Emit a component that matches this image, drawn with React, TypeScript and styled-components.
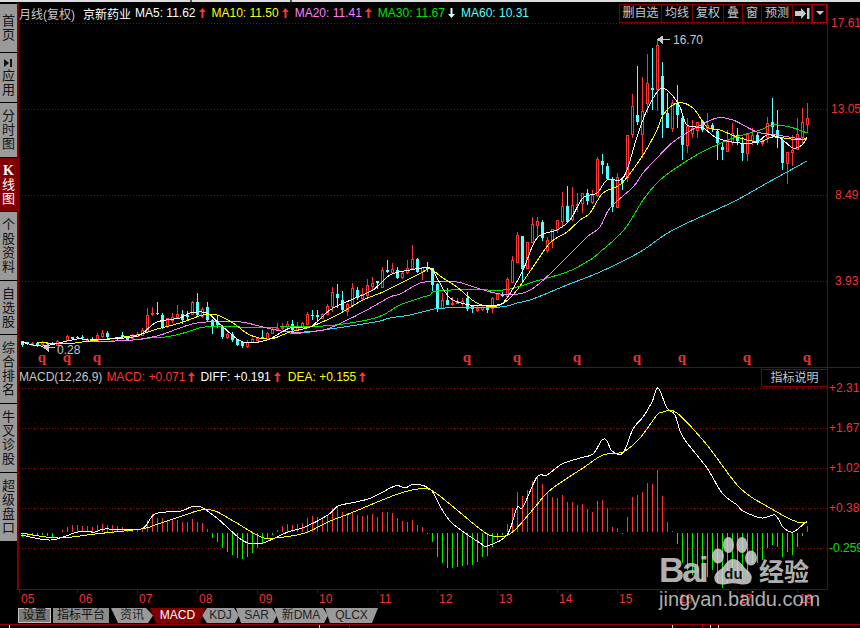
import React from 'react';
import styled, { createGlobalStyle } from 'styled-components';

const DARK_RED = '#800000';
const RED = '#ff3232';
const CYAN = '#54ffff';
const FONT = '"Liberation Sans", "Noto Sans CJK SC", sans-serif';

// Candles in page pixels: x, kind, high, body top, body bottom, low
type Candle = [number, 'r' | 'c', number, number, number, number];

const CANDLES: Candle[] = [
  [22,'c',341,341,345,347],[27,'c',342,342,344,345],[32,'r',342,343,345,345],[37,'c',342,343,345,347],
  [42,'r',341,342,344,346],[47,'c',342,343,344,345],[52,'c',342,343,344,344],[57,'r',340,341,345,346],
  [62,'c',342,343,344,344],[67,'r',335,336,340,341],[72,'c',337,337,339,339],[77,'c',336,337,338,339],
  [82,'c',335,337,338,339],[87,'r',338,339,340,341],[92,'c',337,339,342,342],[97,'r',333,335,340,340],
  [102,'r',330,333,336,338],[107,'c',331,333,337,338],[112,'r',340,340,341,342],[117,'c',339,340,341,341],
  [122,'c',332,335,337,338],[127,'c',337,337,340,340],[132,'r',334,336,338,340],[137,'r',332,334,336,337],
  [142,'r',328,330,335,336],[147,'r',308,315,331,332],[152,'r',307,313,314,316],[157,'c',302,313,314,315],
  [162,'c',313,315,327,329],[167,'r',318,318,326,328],[172,'r',313,317,320,323],[177,'r',305,314,317,318],
  [182,'c',310,314,320,324],[187,'c',311,315,317,321],[192,'r',301,302,314,315],[197,'c',293,302,315,317],
  [202,'r',307,309,316,318],[207,'c',302,307,320,322],[212,'c',319,320,327,334],[217,'c',315,322,325,328],
  [222,'c',325,327,337,339],[227,'r',333,334,337,339],[232,'c',332,334,340,342],[237,'c',339,339,345,346],
  [242,'c',342,342,346,348],[247,'r',340,342,346,348],[252,'r',338,339,342,343],[257,'r',337,338,340,341],
  [262,'c',330,337,337,338],[267,'r',332,333,339,340],[272,'r',328,329,333,334],[277,'r',323,328,329,330],
  [282,'r',323,327,328,330],[287,'r',321,324,326,328],[292,'c',320,324,330,331],[297,'r',322,327,330,331],
  [302,'r',322,323,327,328],[307,'r',312,314,324,325],[312,'c',310,315,316,320],[317,'c',310,315,317,321],
  [322,'r',313,314,318,319],[327,'r',304,306,314,315],[332,'r',287,292,306,312],[337,'c',284,294,298,308],
  [342,'c',291,300,310,311],[347,'r',303,304,311,316],[352,'r',283,288,305,306],[357,'c',287,290,298,300],
  [362,'r',288,294,298,300],[367,'r',279,285,295,297],[372,'r',277,283,286,290],[377,'c',281,281,283,289],
  [382,'r',267,270,287,288],[387,'c',260,270,272,273],[392,'r',263,269,272,274],[397,'c',267,270,278,279],
  [402,'r',272,273,277,279],[407,'r',260,268,272,274],[412,'r',245,259,268,269],[417,'c',258,259,272,273],
  [422,'r',267,267,271,280],[427,'c',262,267,269,272],[432,'c',268,268,285,291],[437,'c',283,284,308,312],
  [442,'r',293,300,308,309],[447,'c',288,300,305,305],[452,'r',297,303,304,306],[457,'r',298,301,303,304],
  [462,'r',298,301,303,306],[467,'c',292,298,309,311],[472,'c',305,306,309,313],[477,'r',306,308,310,312],
  [482,'r',305,307,309,311],[487,'c',305,308,310,313],[492,'r',297,298,308,313],[497,'r',293,294,299,300],
  [502,'c',292,294,296,297],[507,'r',277,279,296,297],[512,'r',256,260,282,282],[517,'r',232,235,262,263],
  [522,'c',236,236,269,283],[527,'r',242,242,268,269],[532,'r',217,224,242,243],[537,'r',217,221,225,239],
  [542,'c',220,222,238,241],[547,'r',237,240,250,253],[552,'r',229,229,240,248],[557,'r',220,220,229,233],
  [562,'r',192,206,221,228],[567,'c',186,206,222,222],[572,'r',187,205,219,221],[577,'r',193,204,205,212],
  [582,'r',193,193,203,213],[587,'c',189,193,201,205],[592,'r',190,195,202,204],[597,'r',157,159,195,197],
  [602,'c',154,161,165,174],[607,'c',163,166,179,180],[612,'c',177,180,207,212],[617,'r',173,177,207,208],
  [622,'c',177,180,183,190],[627,'r',135,135,177,182],[632,'r',94,106,134,138],[637,'c',66,115,122,125],
  [642,'r',77,111,134,158],[647,'r',54,83,103,113],[652,'c',48,88,90,110],[657,'r',40,45,89,111],
  [662,'c',62,76,115,138],[667,'c',93,113,128,128],[672,'r',100,103,128,132],[677,'c',85,104,115,128],
  [682,'c',115,118,145,160],[687,'r',118,126,145,153],[692,'r',120,128,133,138],[697,'r',122,122,130,138],
  [702,'c',120,121,130,132],[707,'r',113,125,128,130],[712,'c',123,125,129,132],[717,'c',130,131,143,160],
  [722,'c',143,147,150,160],[727,'r',130,140,151,151],[732,'r',123,133,142,145],[737,'c',128,135,141,145],
  [742,'c',137,143,153,161],[747,'r',133,134,153,161],[752,'r',128,135,140,145],[757,'c',132,135,143,145],
  [762,'r',138,142,143,146],[767,'r',117,123,137,143],[772,'c',98,122,127,137],[777,'c',110,130,137,148],
  [782,'c',138,140,163,170],[787,'r',152,152,163,184],[792,'r',135,150,152,166],[797,'r',118,134,149,150],
  [802,'r',108,122,137,145],[807,'r',103,118,124,133],
];

const PRICE_LINES = [
  { color: '#2fd8ec', points: '290,334 310,332 330,329 357,325 380,321 390,318 410,315 430,310 445,308 500,307 517,303 533,299 567,285 600,272 640,252 673,230 733,202 767,183 807,161' },
  { color: '#00e800', points: '137,340 150,338 165,337 180,334 190,331 205,327 240,327 280,327 323,326 343,324 367,320 383,315 400,305 420,298 430,295 437,291 483,289 490,291 510,289 533,282 567,272 590,260 600,252 624,230 643,200 657,183 673,170 700,153 717,145 733,138 760,130 773,125 790,127 807,133' },
  { color: '#ff80ff', points: '90,342 133,340 157,336 180,328 197,323 230,321 247,323 267,328 290,332 323,330 343,322 367,310 390,297 400,294 420,283 433,282 457,282 477,288 500,294 523,293 540,283 567,257 587,237 600,227 610,208 633,187 643,173 657,158 673,142 697,127 717,118 733,120 757,132 777,135 807,140' },
  { color: '#ffff00', points: '37,342 63,344 90,341 137,335 157,329 180,323 203,315 217,315 233,323 250,335 270,339 290,332 310,327 337,315 363,300 383,292 407,280 423,272 430,269 443,278 457,287 477,303 497,306 513,295 533,267 550,243 567,232 580,220 590,213 603,193 622,183 643,155 657,130 663,115 677,103 693,108 707,127 720,130 740,138 760,142 773,137 800,140 807,137' },
  { color: '#ffffff', points: '22,342 43,346 77,339 90,340 133,337 143,333 157,322 180,318 190,313 207,313 223,327 243,342 267,340 290,328 310,327 330,310 353,299 373,290 390,275 410,270 430,268 437,278 450,298 470,305 497,305 507,298 523,270 537,238 557,230 570,220 583,198 597,193 607,180 620,180 627,170 637,137 647,110 660,89 670,93 680,107 687,125 703,128 717,138 740,143 757,142 767,135 780,138 793,148 802,145 807,137' },
];

const MACD_LINES = [
  { color: '#ffffff', points: '21,535 51,540 78,532 95,532 105,529 141,529 155,514 181,511 191,507 201,507 218,519 238,537 248,543 263,543 288,532 305,527 328,515 338,506 351,503 371,498 395,486 405,488 415,484 431,490 441,508 451,522 465,533 480,543 487,546 507,535 517,508 523,507 537,477 547,475 562,464 580,458 593,454 602,440 607,441 612,451 623,453 633,429 643,417 652,402 658,388 667,408 675,415 683,437 707,468 722,493 737,505 743,511 762,518 775,515 783,527 793,532 807,521' },
  { color: '#ffff00', points: '21,533 58,538 95,534 141,529 155,525 185,515 201,510 215,511 235,522 261,537 275,538 305,533 328,522 351,513 395,495 418,489 431,490 451,505 480,529 493,536 510,534 530,513 547,493 563,481 583,468 603,455 623,452 640,438 657,415 663,412 677,413 707,445 740,488 770,508 797,522 807,522' },
];

// Histogram ends in page pixels, one bar every 5px starting at x = 22; above 532 is red, below is green
const MACD_BARS = [
  537,536,536,535,535,536,537,533,
  530,527,525,525,526,526,527,525,524,525,525,526,527,529,529,529,528,520,514,518,518,520,520,520,522,522,519,522,523,529,
  538,542,548,552,555,558,559,557,553,548,543,538,535,
  530,526,524,525,524,523,518,516,517,517,515,508,507,512,513,512,515,516,515,514,517,512,512,513,518,521,522,520,525,527,534,
  542,557,563,568,568,567,566,565,565,562,557,556,547,540,535,
  524,508,492,496,490,481,476,484,493,497,498,495,502,502,505,504,509,512,501,500,508,527,528,534,517,497,495,492,483,484,470,496,522,531,
  544,563,570,575,573,580,577,570,583,588,583,580,580,577,575,563,563,560,548,545,547,557,552,555,547,536,
  526,
];

const Q_MARKS = [42, 67, 97, 467, 517, 577, 637, 682, 747, 807];
const PRICE_GRID = [23, 109, 195, 281];
const MACD_GRID = [388, 428, 468, 508, 548];
const YEARS = ['05', '06', '07', '08', '09', '10', '11', '12', '13', '14', '15', '16', '17', '18'];

const SIDE_TABS = [
  { label: '首页', height: 48 },
  { label: '应用', height: 49, icon: true },
  { label: '分时图', height: 54 },
  { label: '线图', height: 53, active: true },
  { label: '个股资料', height: 68 },
  { label: '自选股', height: 53 },
  { label: '综合排名', height: 68 },
  { label: '牛叉诊股', height: 68 },
  { label: '超级盘口', height: 68 },
];

const TOOL_BUTTONS = [
  { label: '删自选', width: 42 },
  { label: '均线', width: 31 },
  { label: '复权', width: 31 },
  { label: '叠', width: 19 },
  { label: '窗', width: 19 },
  { label: '预测', width: 31 },
];

const MA_ITEMS = [
  { label: 'MA5: 11.62', color: '#ffffff', arrow: RED },
  { label: 'MA10: 11.50', color: '#ffff00', arrow: RED },
  { label: 'MA20: 11.41', color: '#ff80ff', arrow: RED },
  { label: 'MA30: 11.67', color: '#00e800', arrow: '#d8ffff', down: true },
  { label: 'MA60: 10.31', color: CYAN },
];

const BOTTOM_TABS = [
  { label: '资讯', width: 42, shape: 'polygon(0 0, 35px 0, 100% 50%, 37px 100%, 7px 100%)' },
  { label: 'MACD', width: 55, active: true, shape: 'polygon(0 0, 100% 0, 50px 100%, 6px 100%)' },
  { label: 'KDJ', width: 37, shape: 'polygon(5px 0, 32px 0, 100% 50%, 33px 100%, 5px 100%, 0 50%)' },
  { label: 'SAR', width: 41, shape: 'polygon(0 0, 36px 0, 100% 50%, 37px 100%, 5px 100%)' },
  { label: '新DMA', width: 54, shape: 'polygon(0 0, 49px 0, 100% 50%, 50px 100%, 5px 100%)' },
  { label: 'QLCX', width: 53, shape: 'polygon(0 0, 100% 0, 47px 100%, 5px 100%)' },
];

// Rounds a point list into a curve, the way the moving averages read in the reference
const toCurve = (points: string) => {
  const p = points.split(' ').map((pair) => pair.split(',').map(Number));
  let d = `M${p[0][0]} ${p[0][1]}`;
  for (let i = 0; i < p.length - 1; i++) {
    const a = p[Math.max(i - 1, 0)];
    const b = p[i];
    const c = p[i + 1];
    const e = p[Math.min(i + 2, p.length - 1)];
    const c1 = [b[0] + (c[0] - a[0]) / 6, b[1] + (c[1] - a[1]) / 6];
    const c2 = [c[0] - (e[0] - b[0]) / 6, c[1] - (e[1] - b[1]) / 6];
    d += `C${c1[0]} ${c1[1]} ${c2[0]} ${c2[1]} ${c[0]} ${c[1]}`;
  }
  return d;
};

const GlobalStyle = createGlobalStyle`
  html, body {
    margin: 0;
    background: #000;
    overflow: hidden;
  }
`;

const Page = styled.div`
  position: relative;
  width: 860px;
  height: 628px;
  overflow: hidden;
  background: #000;
  display: flex;
  flex-direction: column;
  font: 12px ${FONT};
`;

const TopStrip = styled.div`
  height: 2px;
  margin-bottom: 1px;
  background:
    linear-gradient(#555, #555) 190px 0 / 2px 100% no-repeat,
    linear-gradient(#555, #555) 290px 0 / 2px 100% no-repeat,
    #dcdcdc;
`;

const Workspace = styled.div`
  display: flex;
  height: 587px;
`;

const SideBar = styled.div`
  width: 17px;
  flex: none;
  border-right: 2px solid ${DARK_RED};
  padding-top: 1px;
  display: flex;
  flex-direction: column;
  gap: 1px;
`;

const SideTab = styled.div<{ $height: number; $active?: boolean }>`
  height: ${({ $height }) => $height}px;
  flex: none;
  background: ${({ $active }) => ($active ? DARK_RED : '#9a9a9a')};
  color: ${({ $active }) => ($active ? '#fff' : '#111')};
  display: flex;
  flex-direction: column;
  align-items: center;
  justify-content: center;
`;

const SideLabel = styled.div`
  width: 13px;
  font-size: 13px;
  line-height: 14px;
  text-align: center;
`;

const KMark = styled.div`
  font: bold 14px/14px "Liberation Serif", serif;
`;

const PlayIcon = styled.svg`
  width: 9px;
  height: 8px;
  margin-bottom: 2px;
`;

const Panes = styled.div`
  flex: 1;
  min-width: 0;
  display: flex;
  flex-direction: column;
`;

const PriceRow = styled.div`
  display: flex;
  height: 364px;
`;

const MacdRow = styled.div`
  display: flex;
  height: 222px;
  border-top: 1px solid ${DARK_RED};
`;

const Plot = styled.div<{ $closed?: boolean }>`
  width: 808px;
  flex: none;
  border-right: 1px solid ${DARK_RED};
  border-bottom: ${({ $closed }) => ($closed ? `1px solid ${DARK_RED}` : 'none')};
`;

const PlotHeader = styled.div<{ $height: number }>`
  height: ${({ $height }) => $height}px;
  display: flex;
  align-items: center;
  justify-content: space-between;
`;

const Legend = styled.div`
  display: flex;
  align-items: center;
  white-space: nowrap;
`;

const LegendText = styled.span<{ $color: string; $gap?: number }>`
  color: ${({ $color }) => $color};
  margin-left: ${({ $gap }) => $gap ?? 0}px;
`;

const ArrowMark = styled.svg<{ $trail?: number }>`
  width: 7px;
  height: 10px;
  margin-left: 3px;
  margin-right: ${({ $trail }) => $trail ?? 6}px;
`;

const Toolbar = styled.div`
  display: flex;
  height: 19px;
  border: 1px solid ${DARK_RED};
  border-right: none;
  box-sizing: border-box;
`;

const ToolButton = styled.div<{ $width: number }>`
  width: ${({ $width }) => $width}px;
  border-right: 1px solid ${DARK_RED};
  box-sizing: border-box;
  color: #c8c8c8;
  font-size: 12px;
  line-height: 17px;
  text-align: center;
  display: flex;
  align-items: center;
  justify-content: center;
`;

const CaretButton = styled(ToolButton)`
  border: 1px solid #b00000;
  margin-top: -1px;
  height: 19px;
`;

const Caret = styled.div`
  border-left: 4px solid transparent;
  border-right: 4px solid transparent;
  border-top: 4px solid #c8c8c8;
`;

const ExplainButton = styled.div`
  width: 66px;
  height: 18px;
  box-sizing: border-box;
  border: 1px solid ${DARK_RED};
  border-right: none;
  color: #c8c8c8;
  font-size: 12px;
  line-height: 16px;
  text-align: center;
  margin-top: 1px;
`;

const ChartSvg = styled.svg`
  display: block;
`;

const QMark = styled.text`
  fill: #e83030;
  font: bold 15px "Liberation Serif", serif;
  text-anchor: middle;
`;

const Note = styled.text`
  fill: #c4c8cc;
  font: 12px ${FONT};
`;

const Axis = styled.div<{ $gap: number }>`
  flex: 1;
  min-width: 0;
  overflow: hidden;
  display: flex;
  flex-direction: column;
  gap: ${({ $gap }) => $gap}px;
  padding: 12px 0 0 1px;
`;

const AxisLabel = styled.div<{ $color?: string; $indent?: number }>`
  height: 16px;
  line-height: 16px;
  white-space: nowrap;
  color: ${({ $color }) => $color ?? '#f03030'};
  padding-left: ${({ $indent }) => $indent ?? 0}px;
`;

const YearRow = styled.div`
  height: 18px;
  display: flex;
  padding-left: 19px;
`;

const YearCell = styled.div<{ $first?: boolean }>`
  width: ${({ $first }) => ($first ? 58 : 60)}px;
  flex: none;
  position: relative;
  color: #f03030;
  font-size: 12px;
  padding: 2px 0 0 2px;
  line-height: 15px;
  box-sizing: border-box;

  &::before {
    content: '';
    position: absolute;
    left: 0;
    top: 0;
    width: 1px;
    height: 3px;
    background: ${DARK_RED};
  }
`;

const BottomTabs = styled.div`
  height: 16px;
  display: flex;
  padding-left: 18px;
  box-sizing: border-box;
  padding-bottom: 1px;
`;

const FlatTab = styled.div<{ $width: number; $dark?: boolean }>`
  width: ${({ $width }) => $width}px;
  margin-right: 2px;
  box-sizing: border-box;
  background: ${({ $dark }) => ($dark ? '#7a7a7a' : '#8c8c8c')};
  border: ${({ $dark }) => ($dark ? '1px solid #c0c0c0' : 'none')};
  color: #111;
  font-size: 12px;
  line-height: ${({ $dark }) => ($dark ? 13 : 15)}px;
  text-align: center;
`;

const ShapeTab = styled.div<{ $width: number; $active?: boolean; $shape: string }>`
  width: ${({ $width }) => $width}px;
  flex: none;
  margin-right: -3px;
  clip-path: ${({ $shape }) => $shape};
  background: ${({ $active }) => ($active ? DARK_RED : '#9a9a9a')};
  color: ${({ $active }) => ($active ? '#fff' : '#222')};
  font-size: 12px;
  line-height: 15px;
  text-align: center;
  position: relative;
  z-index: ${({ $active }) => ($active ? 1 : 0)};

  &:first-of-type {
    margin-left: 1px;
  }
`;

const Footer = styled.div`
  height: 3px;
  border-top: 1px solid #a00000;
  background:
    linear-gradient(#fff, #fff) 9px 0 / 1px 100% no-repeat,
    linear-gradient(${CYAN}, ${CYAN}) 319px 0 / 1px 100% no-repeat,
    linear-gradient(#900, #900) 349px 0 / 1px 100% no-repeat,
    linear-gradient(${CYAN}, ${CYAN}) 672px 0 / 1px 100% no-repeat,
    linear-gradient(#900, #900) 702px 0 / 1px 100% no-repeat,
    linear-gradient(#ccc, #ccc) 710px 0 / 1px 100% no-repeat,
    linear-gradient(#ccc, #ccc) 718px 0 / 1px 100% no-repeat;
`;

// Baidu jingyan mark lying over the lower right of the chart
const Watermark = styled.div`
  position: absolute;
  left: 659px;
  top: 537px;
  width: 156px;
  z-index: 5;
  color: rgba(208, 208, 208, 0.86);
  pointer-events: none;
`;

const MarkTop = styled.div`
  height: 48px;
  display: flex;
  align-items: flex-end;
`;

const MarkBai = styled.div`
  font: bold 35px/30px "Liberation Sans", sans-serif;
  letter-spacing: -2.4px;
  width: 52px;
  flex: none;
`;

const MarkCn = styled.div`
  font: bold 25px/30px "Noto Sans CJK SC", sans-serif;
  margin-left: 2px;
  white-space: nowrap;
`;

const MarkUrl = styled.div`
  font: 20px/22px "Liberation Sans", sans-serif;
  margin-top: 3px;
  white-space: nowrap;
`;

const Arrow = ({ color, down, trail }: { color: string; down?: boolean; trail?: number }) => (
  <ArrowMark viewBox="0 0 7 10" $trail={trail}>
    <path
      d={down ? 'M2.5 0h2v6H7L3.5 10 0 6h2.5z' : 'M3.5 0 7 4H4.5v6h-2V4H0z'}
      fill={color}
    />
  </ArrowMark>
);

const CandleMark = ({ candle }: { candle: Candle }) => {
  const [x, kind, high, top, bottom, low] = candle;
  const color = kind === 'r' ? RED : CYAN;
  return (
    <g>
      <line x1={x + 0.5} x2={x + 0.5} y1={high} y2={top} stroke={color} />
      <line x1={x + 0.5} x2={x + 0.5} y1={bottom} y2={low} stroke={color} />
      {kind === 'r' ? (
        <rect x={x - 0.5} y={top + 0.5} width={2} height={Math.max(bottom - top, 1)} fill="#000" stroke={color} />
      ) : (
        <rect x={x - 1} y={top} width={3} height={Math.max(bottom - top, 1)} fill={color} />
      )}
    </g>
  );
};

const PriceChart = () => (
  <ChartSvg width={808} height={344} viewBox="19 23 808 344" shapeRendering="crispEdges">
    {PRICE_GRID.map((y) => (
      <line key={y} x1={19} x2={827} y1={y + 0.5} y2={y + 0.5} stroke="#9a0000" strokeDasharray="1 2" />
    ))}
    {CANDLES.map((candle) => (
      <CandleMark key={candle[0]} candle={candle} />
    ))}
    {PRICE_LINES.map((line) => (
      <path key={line.color} d={toCurve(line.points)} fill="none" stroke={line.color} />
    ))}
    {Q_MARKS.map((x) => (
      <QMark key={x} x={x} y={362}>q</QMark>
    ))}
    <path d="M658 39.5h12M658 39.5l4-3v6z" stroke="#c4c8cc" fill="#c4c8cc" />
    <Note x={673} y={44}>16.70</Note>
    <path d="M44 347.5h11M44 347.5l4-3v6z" stroke="#c4c8cc" fill="#c4c8cc" />
    <Note x={57} y={354}>0.28</Note>
  </ChartSvg>
);

const MacdChart = () => (
  <ChartSvg width={808} height={203} viewBox="19 386 808 203" shapeRendering="crispEdges">
    {MACD_GRID.map((y) => (
      <line key={y} x1={19} x2={827} y1={y + 0.5} y2={y + 0.5} stroke="#9a0000" strokeDasharray="1 2" />
    ))}
    {MACD_BARS.map((end, i) => {
      const x = 22 + i * 5 + 0.5;
      const up = end <= 532;
      return <line key={x} x1={x} x2={x} y1={up ? 532 : 533} y2={end} stroke={up ? RED : '#00f000'} />;
    })}
    {MACD_LINES.map((line) => (
      <path key={line.color} d={toCurve(line.points)} fill="none" stroke={line.color} />
    ))}
  </ChartSvg>
);

const App = () => (
  <Page>
    <GlobalStyle />
    <TopStrip />
    <Workspace>
      <SideBar>
        {SIDE_TABS.map((tab) => (
          <SideTab key={tab.label} $height={tab.height} $active={tab.active}>
            {tab.icon && (
              <PlayIcon viewBox="0 0 9 8">
                <path d="M0 0l5 4-5 4zM6 0h2v8H6z" fill="#111" />
              </PlayIcon>
            )}
            {tab.active && <KMark>K</KMark>}
            <SideLabel>{tab.label}</SideLabel>
          </SideTab>
        ))}
      </SideBar>
      <Panes>
        <PriceRow>
          <Plot>
            <PlotHeader $height={20}>
              <Legend>
                <LegendText $color="#c8c8c8">月线(复权)</LegendText>
                <LegendText $color="#fff" $gap={8}>京新药业</LegendText>
                {MA_ITEMS.map((item, i) => (
                  <React.Fragment key={item.label}>
                    <LegendText $color={item.color} $gap={i === 0 ? 4 : 0}>{item.label}</LegendText>
                    {item.arrow && <Arrow color={item.arrow} down={item.down} />}
                  </React.Fragment>
                ))}
              </Legend>
              <Toolbar>
                {TOOL_BUTTONS.map((button) => (
                  <ToolButton key={button.label} $width={button.width}>{button.label}</ToolButton>
                ))}
                <ToolButton $width={19}>
                  <svg width="15" height="11" viewBox="0 0 15 11">
                    <path d="M0 3h6V0l5 5.500L6 11V8H0zM12 0h2.500v11H12z" fill="#c8c8c8" />
                  </svg>
                </ToolButton>
                <CaretButton $width={15}>
                  <Caret />
                </CaretButton>
              </Toolbar>
            </PlotHeader>
            <PriceChart />
          </Plot>
          <Axis $gap={70}>
            <AxisLabel $indent={2}>17.61</AxisLabel>
            <AxisLabel $indent={2}>13.05</AxisLabel>
            <AxisLabel $indent={6}>8.49</AxisLabel>
            <AxisLabel $indent={6}>3.93</AxisLabel>
          </Axis>
        </PriceRow>
        <MacdRow>
          <Plot $closed>
            <PlotHeader $height={18}>
              <Legend>
                <LegendText $color="#c8c8c8">MACD(12,26,9)</LegendText>
                <LegendText $color={RED} $gap={4}>MACD: +0.071</LegendText>
                <Arrow color={RED} trail={5} />
                <LegendText $color="#fff">DIFF: +0.191</LegendText>
                <Arrow color={RED} trail={7} />
                <LegendText $color="#ffff00">DEA: +0.155</LegendText>
                <Arrow color={RED} />
              </Legend>
              <ExplainButton>指标说明</ExplainButton>
            </PlotHeader>
            <MacdChart />
          </Plot>
          <Axis $gap={24}>
            <AxisLabel>+2.31</AxisLabel>
            <AxisLabel>+1.67</AxisLabel>
            <AxisLabel>+1.02</AxisLabel>
            <AxisLabel>+0.38</AxisLabel>
            <AxisLabel $color="#00e000">-0.259</AxisLabel>
          </Axis>
        </MacdRow>
      </Panes>
    </Workspace>
    <YearRow>
      {YEARS.map((year, i) => (
        <YearCell key={year} $first={i === 0}>{year}</YearCell>
      ))}
    </YearRow>
    <BottomTabs>
      <FlatTab $width={33} $dark>设置</FlatTab>
      <FlatTab $width={56}>指标平台</FlatTab>
      {BOTTOM_TABS.map((tab) => (
        <ShapeTab key={tab.label} $width={tab.width} $active={tab.active} $shape={tab.shape}>
          {tab.label}
        </ShapeTab>
      ))}
    </BottomTabs>
    <Footer />
    <Watermark>
      <MarkTop>
        <MarkBai>Bai</MarkBai>
        <svg width="46" height="48" viewBox="0 0 46 48">
          <ellipse cx="7" cy="19" rx="6" ry="7.500" fill="currentColor" />
          <ellipse cx="17.500" cy="8" rx="5.500" ry="8" fill="currentColor" />
          <ellipse cx="31" cy="8" rx="5.500" ry="8" fill="currentColor" />
          <ellipse cx="40" cy="21" rx="6" ry="7.500" fill="currentColor" />
          <path d="M22 22c6 0 9 6 13 10 5 4 7 7 5 12-2 4-7 4-12 3-4-1-8-1-12 0-5 1-10 1-12-3-2-5 1-9 6-12 4-3 6-10 12-10z" fill="currentColor" />
          <text x="22.500" y="42" textAnchor="middle" fontSize="15" fontWeight="bold" fontFamily="Liberation Sans" fill="#111">du</text>
        </svg>
        <MarkCn>经验</MarkCn>
      </MarkTop>
      <MarkUrl>jingyan.baidu.com</MarkUrl>
    </Watermark>
  </Page>
);

export default App;
